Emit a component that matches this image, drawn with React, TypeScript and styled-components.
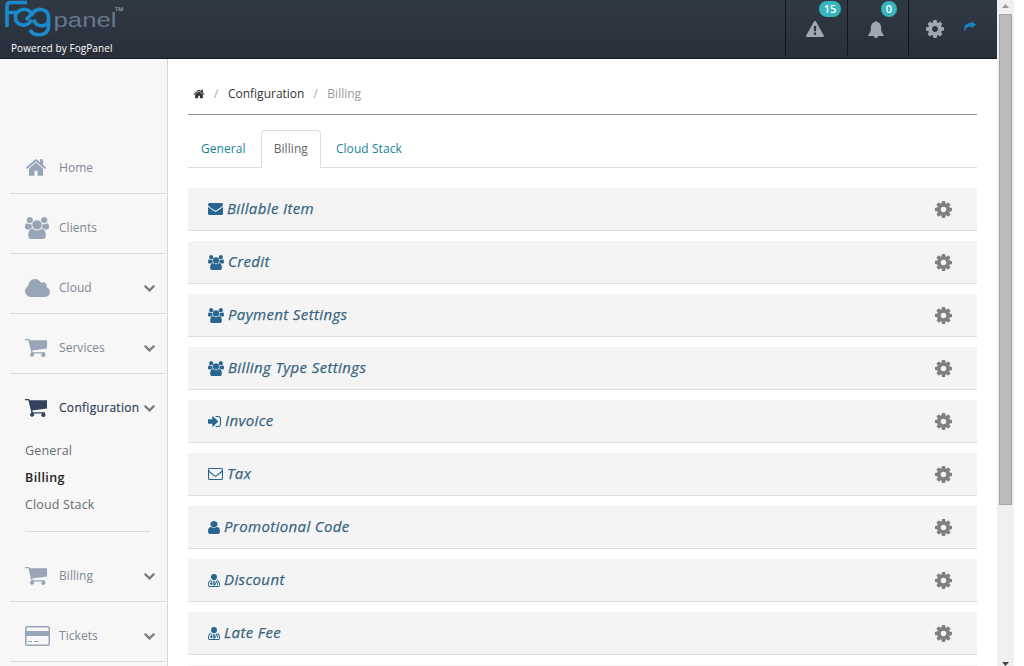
import React from "react";
import styled, { createGlobalStyle, css } from "styled-components";

const GlobalStyle = createGlobalStyle`
  * { box-sizing: border-box; }
  html, body { margin: 0; padding: 0; overflow: hidden; background: #fff; }
  body { font-family: "Open Sans", sans-serif; font-size: 13px; }
`;

const icons = {
  home: {
    box: "0 0 1792 1792",
    d: "M1472 992v480q0 26-19 45t-45 19h-384v-384h-256v384h-384q-26 0-45-19t-19-45v-480q0-1 .5-3t.5-3l575-474 575 474q1 2 1 6zm223-69l-62 74q-8 9-21 11h-3q-13 0-21-7l-692-577-692 577q-12 8-24 7-13-2-21-11l-62-74q-8-10-7-23.5t11-21.5l719-599q32-26 76-26t76 26l244 204v-195q0-14 9-23t23-9h192q14 0 23 9t9 23v408l219 182q10 8 11 21.5t-7 23.5z",
  },
  users: {
    box: "0 0 1920 1792",
    d: "M593 896q-162 5-265 128h-134q-82 0-138-40.5t-56-118.5q0-353 124-353 6 0 43.5 21t97.5 42.5 119 21.5q67 0 133-23-5 37-5 66 0 139 81 256zm1071 637q0 120-73 189.5t-194 69.5h-874q-121 0-194-69.5t-73-189.5q0-53 3.5-103.5t14-109 26.5-108.5 43-97.5 62-81 85.5-53.5 111.5-20q10 0 43 21.5t73 48 107 48 135 21.5 135-21.5 107-48 73-48 43-21.5q61 0 111.5 20t85.5 53.5 62 81 43 97.5 26.5 108.5 14 109 3.5 103.5zm-1024-1277q0 106-75 181t-181 75-181-75-75-181 75-181 181-75 181 75 75 181zm704 384q0 159-112.5 271.5t-271.5 112.5-271.5-112.5-112.5-271.5 112.5-271.5 271.5-112.5 271.5 112.5 112.5 271.5zm576 225q0 78-56 118.5t-138 40.5h-134q-103-123-265-128 81-117 81-256 0-29-5-66 66 23 133 23 59 0 119-21.5t97.5-42.5 43.5-21q124 0 124 353zm-128-609q0 106-75 181t-181 75-181-75-75-181 75-181 181-75 181 75 75 181z",
  },
  cloud: {
    box: "64 128 1920 1408",
    d: "M1984 1152q0 159-112.5 271.5t-271.5 112.5h-1088q-185 0-316.5-131.5t-131.5-316.5q0-132 71-241.5t187-163.5q-2-28-2-43 0-212 150-362t362-150q158 0 286.5 88t187.5 230q70-62 166-62 106 0 181 75t75 181q0 75-41 138 129 30 213 134.5t84 239.5z",
  },
  cart: {
    box: "0 0 22 18",
    d: "M0 0h4.200l.6 1.200H22v8.300L7.200 11.600l.5 1.600H20v1.200h-.4a2 2 0 1 1-2.400 0H8.700a2 2 0 1 1-3.200.1L6.400 13.400 3.400 1.300H0z",
  },
  card: {
    box: "0 0 25 20",
    d: "M2 0h21a2 2 0 0 1 2 2v16a2 2 0 0 1-2 2H2a2 2 0 0 1-2-2V2a2 2 0 0 1 2-2zM1.500 1.500v3.500h22V1.500zM1.500 10v8a.5.5 0 0 0 .5.5h21a.5.5 0 0 0 .5-.5v-8zM3 15h4v1H3zM9 15h4.500v1H9z",
  },
  chevron: {
    box: "90 530 1612 1040",
    d: "M1683 808l-742 741q-19 19-45 19t-45-19l-742-741q-19-19-19-45.5t19-45.500l166-165q19-19 45-19t45 19l531 531 531-531q19-19 45-19t45 19l166 165q19 19 19 45.500t-19 45.500z",
  },
  envelope: {
    box: "0 256 1792 1408",
    d: "M1792 710v794q0 66-47 113t-113 47h-1472q-66 0-113-47t-47-113v-794q44 49 101 87 362 246 497 345 57 42 92.500 65.500t94.500 48 110 24.500h2q51 0 110-24.500t94.500-48 92.500-65.500q170-123 498-345 57-39 100-87zm0-294q0 79-49 151t-122 123q-376 261-468 325-10 7-42.500 31t-54 38.500-52 32.500-57.500 27-50 9h-2q-23 0-50-9t-57.500-27-52-32.500-54-38.500-42.500-31q-91-64-262-182.500t-205-142.500q-62-42-117-115.500t-55-136.500q0-78 41.500-130t118.500-52h1472q65 0 112.500 47t47.500 113z",
  },
  envelopeOpen: {
    box: "0 256 1792 1408",
    d: "M1664 1504v-768q-32 36-69 66-268 206-426 338-51 43-83 67t-86.500 48.500-102.500 24.500h-2q-48 0-102.500-24.500t-86.500-48.500-83-67q-158-132-426-338-37-30-69-66v768q0 13 9.500 22.500t22.500 9.500h1472q13 0 22.500-9.500t9.500-22.500zm0-1051v-24.500l-.5-13-3-12.500-5.500-9-9-7.500-14-2.500h-1472q-13 0-22.500 9.500t-9.500 22.500q0 168 147 284 193 152 401 317 6 5 35 29.500t46 37.500 44.500 31.500 50.500 27.500 43 9h2q20 0 43-9t50.500-27.500 44.500-31.500 46-37.500 35-29.500q208-165 401-317 54-43 100.500-115.500t46.500-131.500zm128-37v1088q0 66-47 113t-113 47h-1472q-66 0-113-47t-47-113v-1088q0-66 47-113t113-47h1472q66 0 113 47t47 113z",
  },
  signIn: {
    box: "128 256 1536 1280",
    d: "M1312 896q0 26-19 45l-544 544q-19 19-45 19t-45-19-19-45v-288h-448q-26 0-45-19t-19-45v-384q0-26 19-45t45-19h448v-288q0-26 19-45t45-19 45 19l544 544q19 19 19 45zm352-352v704q0 119-84.500 203.500t-203.500 84.500h-320q-13 0-22.500-9.500t-9.500-22.500q0-4-1-20t-.5-26.500 3-23.500 10-19.500 20.500-6.500h320q66 0 113-47t47-113v-704q0-66-47-113t-113-47h-312l-11.500-1-11.500-3-8-5.500-7-9-2-13.500q0-4-1-20t-.5-26.500 3-23.500 10-19.500 20.500-6.500h320q119 0 203.500 84.500t84.500 203.500z",
  },
  user: {
    box: "256 128 1280 1536",
    d: "M1536 1399q0 109-62.500 187t-150.500 78h-854q-88 0-150.500-78t-62.500-187q0-85 8.500-160.500t31.500-152 58.500-131 94-89 134.500-34.500q131 128 313 128t313-128q76 0 134.500 34.500t94 89 58.500 131 31.500 152 8.500 160.500zm-256-887q0 159-112.500 271.500t-271.500 112.500-271.500-112.500-112.500-271.500 112.500-271.500 271.500-112.500 271.500 112.500 112.500 271.500z",
  },
  doctor: {
    box: "0 0 12 13",
    d: "M6 0a3 3.100 0 1 1 0 6.200A3 3.100 0 1 1 6 0zM2.700 6.100 3.800 6.900V8.600a1.200 1.200 0 1 1-.8 0V7.100C1.500 7.700.9 9 .9 10.900c0 .8.500 1.200 1.200 1.200h7.800c.7 0 1.200-.4 1.200-1.200 0-1.900-.6-3.200-2.100-3.800v1.100c1 .3 1.200 1 1.200 2.800H9.200V10c0-.8-.2-1.100-.7-1.100s-.7.3-.7 1.100v1H6.900c0-1.800.300-2.500 1.300-2.800V6.900L9.300 6.100C11.300 6.700 12 8.400 12 10.900c0 1.300-.8 2.100-2.100 2.100H2.100C.8 13 0 12.200 0 10.900 0 8.400.7 6.700 2.700 6.100zM4.600 7.200h2.800L6.700 8.500v3.300H5.300V8.500z",
  },
  gear: {
    box: "128 128 1536 1536",
    d: "M1152 896q0-106-75-181t-181-75-181 75-75 181 75 181 181 75 181-75 75-181zm512-109v222q0 12-8 23t-20 13l-185 28q-19 54-39 91 35 50 107 138 10 12 10 25t-9 23q-27 37-99 108t-94 71q-12 0-26-9l-138-108q-44 23-91 38-16 136-29 186-7 28-36 28h-222q-14 0-24.5-8.5t-11.5-21.5l-28-184q-49-16-90-37l-141 107q-10 9-25 9-14 0-25-11-126-114-165-168-7-10-7-23 0-12 8-23 15-21 51-66.5t54-70.5q-27-50-41-99l-183-27q-13-2-21-12.5t-8-23.5v-222q0-12 8-23t19-13l186-28q14-46 39-92-40-57-107-138-10-12-10-24 0-10 9-23 26-36 98.5-107.5t94.5-71.5q13 0 26 10l138 107q44-23 91-38 16-136 29-186 7-28 36-28h222q14 0 24.5 8.5t11.5 21.5l28 184q49 16 90 37l142-107q9-9 24-9 13 0 25 10 129 119 165 170 7 8 7 22 0 12-8 23-15 21-51 66.5t-54 70.5q26 50 41 98l183 28q13 2 21 12.5t8 23.5z",
  },
  warning: {
    box: "0 0 18 16",
    d: "M9 0q.8 0 1.300.9l7.500 13.500q.6 1.500-1.100 1.600H1.300Q-.4 15.900.2 14.400L7.700.9Q8.200 0 9 0zM7.700 5l.4 5.300h1.800l.4-5.300zM7.900 11.400v2.300h2.200v-2.300z",
  },
  bell: {
    box: "0 0 16 17",
    d: "M8 0q1 0 1.100 1.100c3 .7 4 3 4 5.700 0 3.700.7 5.500 2.900 7.200q0 .9-1 .9h-4.800a2.200 2.100 0 0 1-4.400 0H1q-1 0-1-.9c2.200-1.700 2.900-3.500 2.900-7.200 0-2.700 1-5 4-5.700Q7 0 8 0z",
  },
  share: {
    box: "0 0 12 11",
    d: "M7.500 0 12 3.700 7.500 7.600V5.400C4 5.200 1.800 6.200.7 10.600-1.100 5.800 1.600 2 7.500 2z",
  },
};

type IconName = keyof typeof icons;

const Svg = styled.svg<{ $w: number; $h: number }>`
  display: block;
  flex: none;
  width: ${(p) => p.$w}px;
  height: ${(p) => p.$h}px;
  fill: currentColor;
  fill-rule: evenodd;
`;

const Icon = ({ name, w, h }: { name: IconName; w: number; h: number }) => (
  <Svg viewBox={icons[name].box} preserveAspectRatio="none" $w={w} $h={h} aria-hidden>
    <path d={icons[name].d} />
  </Svg>
);

const Window = styled.div`
  display: flex;
  width: 1014px;
  height: 666px;
  overflow: hidden;
`;

const Page = styled.div`
  display: flex;
  flex-direction: column;
  width: 997px;
  height: 666px;
  overflow: hidden;
`;

const Header = styled.header`
  display: flex;
  justify-content: space-between;
  flex: none;
  height: 59px;
  background: linear-gradient(#2f3944, #292f3a);
  border-bottom: 1px solid #171c23;
`;

const Brand = styled.div`
  padding-left: 5px;
  color: #fff;
`;

const Tagline = styled.div`
  margin: 3px 0 0 6px;
  font-size: 10px;
  line-height: 14px;
  letter-spacing: 0.08px;
`;

const LogoSvg = styled.svg`
  display: block;
  width: 122px;
  height: 38px;
`;

const Logo = () => (
  <LogoSvg viewBox="5 0 122 38">
    <g fill="none" stroke="#198bcd" strokeWidth="3.600">
      <path d="M7 27V6q0-3.500 3.500-3.500H27" />
      <path d="M8 12.500h8" />
      <path d="M33.500 15.500L30 11.500C24 6.500 15.500 11 15.500 17.500c0 7.500 9 9.500 13.500 5.500l3-3" />
      <path d="M26 20l7-7.500C38 7 48.500 9 48.500 17v9c0 8-7 9.500-12 8.500q-4-.5-6.500-4.500" />
      <path d="M34 19.500c1 7.500 12 8.500 14.500 1.500" />
    </g>
    <text x="53.500" y="27" fontFamily="Liberation Sans" fontSize="20" fill="#66788b" textLength="63" lengthAdjust="spacingAndGlyphs">panel</text>
    <text x="114" y="14" fontFamily="Liberation Sans" fontSize="10" fill="#a0a8b0">™</text>
  </LogoSvg>
);

const Tools = styled.div`
  display: flex;
  color: #a0a7b2;
`;

const Tool = styled.div<{ $w: number }>`
  position: relative;
  display: flex;
  width: ${(p) => p.$w}px;
  height: 56px;
  border-left: 1px solid #11161d;
`;

const ToolIcon = styled.div<{ $x: number; $y: number; $blue?: boolean }>`
  margin: ${(p) => p.$y}px 0 0 ${(p) => p.$x}px;
  color: ${(p) => (p.$blue ? "#1684c0" : "inherit")};
`;

const Badge = styled.span<{ $x: number; $w: number }>`
  position: absolute;
  top: 1px;
  left: ${(p) => p.$x}px;
  width: ${(p) => p.$w}px;
  height: 16px;
  border-radius: 8px;
  background: #35b5bd;
  color: #fff;
  font-size: 11px;
  font-weight: 600;
  line-height: 16px;
  text-align: center;
`;

const Body = styled.div`
  display: flex;
  flex: 1;
  min-height: 0;
`;

const Sidebar = styled.nav`
  flex: none;
  width: 168px;
  padding: 75px 1px 0 10px;
  background: #f7f7f7;
  border-right: 1px solid #d6d6d6;
  color: #7d8795;
`;

const NavItem = styled.div<{ $active?: boolean }>`
  display: flex;
  align-items: center;
  height: 60px;
  padding: 8px 11px 0 15px;
  ${(p) =>
    p.$active
      ? css`
          color: #2f3f58;
          padding-bottom: 1px;
        `
      : css`
          border-bottom: 1px solid #d9dbdb;
        `}
`;

const NavIcon = styled.div<{ $active?: boolean }>`
  width: 34px;
  color: ${(p) => (p.$active ? "#31415e" : "#98a4b8")};
`;

const NavLabel = styled.span<{ $active?: boolean }>`
  flex: 1;
  font-size: 12px;
  white-space: nowrap;
  letter-spacing: ${(p) => (p.$active ? "0.3px" : "0.05px")};
  -webkit-text-stroke: ${(p) => (p.$active ? "0.2px" : "0")};
`;

const Arrow = styled.div`
  padding-top: 2px;
  color: #777c81;
`;

const SubMenu = styled.div`
  width: 125px;
  height: 98px;
  margin: 0 0 10px 15px;
  padding-top: 3px;
  border-bottom: 1px solid #d9dbdb;
`;

const SubItem = styled.div<{ $active?: boolean }>`
  font-size: 12.5px;
  line-height: 27px;
  letter-spacing: ${(p) => (p.$active ? 0.4 : 0.15)}px;
  color: ${(p) => (p.$active ? "#222" : "#666c72")};
  font-weight: ${(p) => (p.$active ? 600 : 400)};
`;

const Content = styled.main`
  flex: 1;
  padding: 20px 20px 0;
`;

const Crumbs = styled.div`
  display: flex;
  align-items: center;
  height: 36px;
  padding: 0 0 6px 5px;
  border-bottom: 1px solid #8b9092;
  font-size: 12px;
  color: #333;
`;

const CrumbHome = styled.div`
  padding-top: 1px;
`;

const Slash = styled.span`
  padding: 0 9.5px 0 9px;
  color: #aaa;
`;

const Muted = styled.span`
  color: #999;
`;

const Tabs = styled.div`
  display: flex;
  gap: 2px;
  height: 38px;
  margin-top: 15px;
  border-bottom: 1px solid #ddd;
`;

const Tab = styled.div<{ $active?: boolean }>`
  height: 38px;
  padding: 0 12px;
  border: 1px solid ${(p) => (p.$active ? "#ddd" : "transparent")};
  border-bottom: 0;
  border-radius: 4px 4px 0 0;
  background: ${(p) => (p.$active ? "#fff" : "transparent")};
  color: ${(p) => (p.$active ? "#666" : "#168599")};
  font-size: 12px;
  letter-spacing: 0.07px;
  line-height: 36px;
`;

const Panels = styled.div`
  display: grid;
  gap: 10px;
  margin-top: 20px;
`;

const Panel = styled.section`
  display: flex;
  align-items: center;
  justify-content: space-between;
  height: 43px;
  padding: 0 25px 0 20px;
  background: #f4f4f4;
  border-bottom: 1px solid #dedede;
  color: #808080;
`;

const PanelTitle = styled.div`
  display: flex;
  align-items: center;
  gap: 4px;
  color: #286690;
`;

const PanelName = styled.span`
  padding-bottom: 2px;
  color: #38657f;
  font-size: 15px;
  font-style: italic;
  line-height: 20px;
  letter-spacing: 0.37px;
  -webkit-text-stroke: 0.25px;
`;

const Scrollbar = styled.div`
  display: flex;
  flex-direction: column;
  align-items: center;
  width: 17px;
  height: 666px;
  background: #f0f0f0;
`;

const Thumb = styled.div`
  width: 13px;
  height: 492px;
  margin: 6px 0 157px;
  background: #bcbcbc;
  border: 1px solid #a5a5a5;
`;

const Caret = styled.svg<{ $up?: boolean }>`
  display: block;
  flex: none;
  width: 7px;
  height: 4px;
  margin-top: ${(p) => (p.$up ? 4 : 0)}px;
  fill: ${(p) => (p.$up ? "#999" : "#444")};
`;

type NavEntry = { label: string; icon: IconName; w: number; h: number; arrow?: boolean };

const topNav: NavEntry[] = [
  { label: "Home", icon: "home", w: 22, h: 23 },
  { label: "Clients", icon: "users", w: 24, h: 22 },
  { label: "Cloud", icon: "cloud", w: 25, h: 18, arrow: true },
  { label: "Services", icon: "cart", w: 22, h: 18, arrow: true },
];

const configNav: NavEntry = { label: "Configuration", icon: "cart", w: 22, h: 18, arrow: true };

const bottomNav: NavEntry[] = [
  { label: "Billing", icon: "cart", w: 22, h: 18, arrow: true },
  { label: "Tickets", icon: "card", w: 25, h: 20, arrow: true },
];

const panels: { label: string; icon: IconName; w: number; h: number }[] = [
  { label: "Billable Item", icon: "envelope", w: 15, h: 12 },
  { label: "Credit", icon: "users", w: 16, h: 15 },
  { label: "Payment Settings", icon: "users", w: 16, h: 15 },
  { label: "Billing Type Settings", icon: "users", w: 16, h: 15 },
  { label: "Invoice", icon: "signIn", w: 13, h: 11 },
  { label: "Tax", icon: "envelopeOpen", w: 15, h: 12 },
  { label: "Promotional Code", icon: "user", w: 12, h: 13 },
  { label: "Discount", icon: "doctor", w: 12, h: 13 },
  { label: "Late Fee", icon: "doctor", w: 12, h: 13 },
];

const NavRow = ({ item, active }: { item: NavEntry; active?: boolean }) => (
  <NavItem $active={active}>
    <NavIcon $active={active}>
      <Icon name={item.icon} w={item.w} h={item.h} />
    </NavIcon>
    <NavLabel $active={active}>{item.label}</NavLabel>
    {item.arrow && (
      <Arrow>
        <Icon name="chevron" w={11} h={7} />
      </Arrow>
    )}
  </NavItem>
);

export default function App() {
  return (
    <Window>
      <GlobalStyle />
      <Page>
        <Header>
          <Brand>
            <Logo />
            <Tagline>Powered by FogPanel</Tagline>
          </Brand>
          <Tools>
            <Tool $w={62}>
              <ToolIcon $x={20} $y={21}><Icon name="warning" w={18} h={16} /></ToolIcon>
              <Badge $x={33} $w={22}>15</Badge>
            </Tool>
            <Tool $w={61}>
              <ToolIcon $x={20} $y={21}><Icon name="bell" w={16} h={17} /></ToolIcon>
              <Badge $x={33} $w={16}>0</Badge>
            </Tool>
            <Tool $w={89}>
              <ToolIcon $x={17} $y={20}><Icon name="gear" w={18} h={18} /></ToolIcon>
              <ToolIcon $x={20} $y={21} $blue><Icon name="share" w={12} h={11} /></ToolIcon>
            </Tool>
          </Tools>
        </Header>
        <Body>
          <Sidebar>
            {topNav.map((item) => <NavRow key={item.label} item={item} />)}
            <NavRow active item={configNav} />
            <SubMenu>
              <SubItem>General</SubItem>
              <SubItem $active>Billing</SubItem>
              <SubItem>Cloud Stack</SubItem>
            </SubMenu>
            {bottomNav.map((item) => <NavRow key={item.label} item={item} />)}
          </Sidebar>
          <Content>
            <Crumbs>
              <CrumbHome>
                <Icon name="home" w={12} h={12} />
              </CrumbHome>
              <Slash>/</Slash>
              <span>Configuration</span>
              <Slash>/</Slash>
              <Muted>Billing</Muted>
            </Crumbs>
            <Tabs>
              <Tab>General</Tab>
              <Tab $active>Billing</Tab>
              <Tab>Cloud Stack</Tab>
            </Tabs>
            <Panels>
              {panels.map((p) => (
                <Panel key={p.label}>
                  <PanelTitle>
                    <Icon name={p.icon} w={p.w} h={p.h} />
                    <PanelName>{p.label}</PanelName>
                  </PanelTitle>
                  <Icon name="gear" w={17} h={17} />
                </Panel>
              ))}
              <Panel />
            </Panels>
          </Content>
        </Body>
      </Page>
      <Scrollbar>
        <Caret $up viewBox="0 0 7 4"><path d="M3.500 0 7 4H0z" /></Caret>
        <Thumb />
        <Caret viewBox="0 0 7 4"><path d="M0 0h7L3.500 4z" /></Caret>
      </Scrollbar>
    </Window>
  );
}
